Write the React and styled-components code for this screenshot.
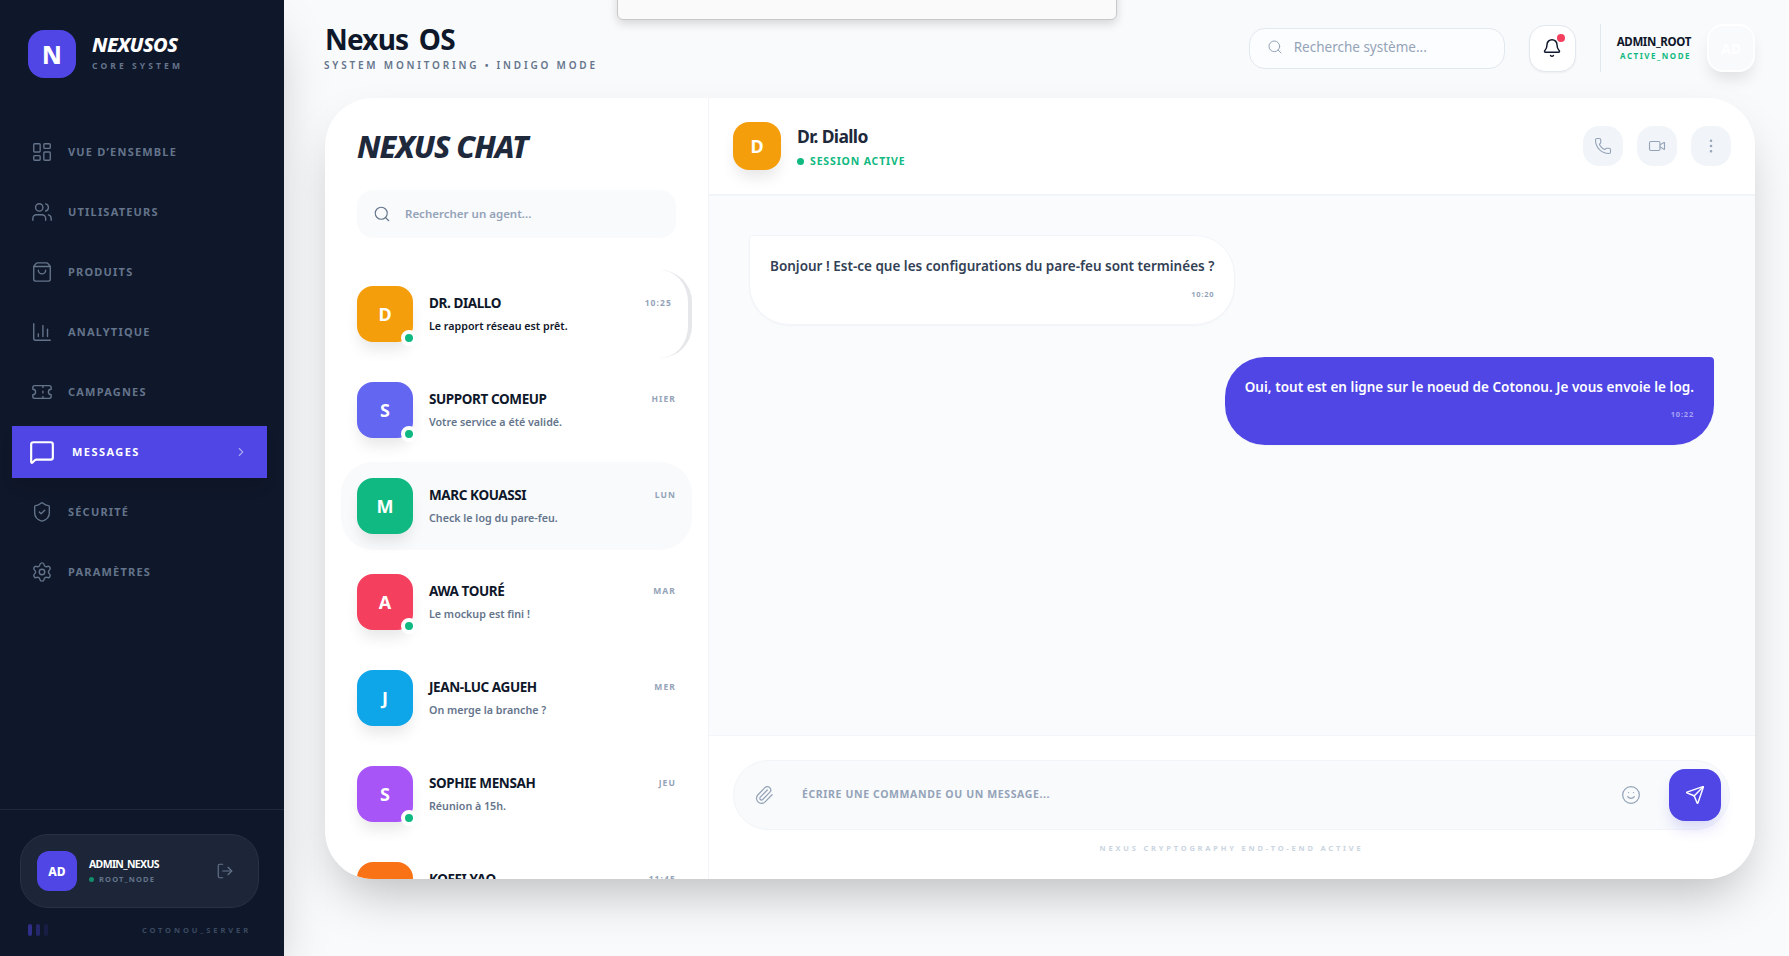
import React from "react";
import styled, { createGlobalStyle } from "styled-components";
import {
  LayoutDashboard,
  Users,
  ShoppingBag,
  ChartColumn,
  Ticket,
  MessageSquare,
  ShieldCheck,
  Settings,
  ChevronRight,
  LogOut,
  Search,
  Bell,
  Phone,
  Video,
  EllipsisVertical,
  Paperclip,
  Smile,
  Send
} from "lucide-react";

const FONT = `"Noto Sans", "Open Sans", sans-serif`;

const GlobalStyle = createGlobalStyle`
  * { box-sizing: border-box; }
  html, body { margin: 0; height: 100%; overflow: hidden; }
  body { font-family: ${FONT}; background: #f8fafc; }
`;

const Page = styled.div`
  display: flex;
  width: 100vw;
  height: 100vh;
  background: #f8fafc;
  overflow: hidden;
`;

const Sidebar = styled.aside`
  flex: 0 0 284px;
  display: flex;
  flex-direction: column;
  background: #0f172a;
  box-shadow: 0 25px 50px -12px rgba(0, 0, 0, 0.25);
  z-index: 2;
`;

const Brand = styled.div`
  display: flex;
  gap: 16px;
  padding: 30px 28px 0;
  height: 126px;
  align-items: flex-start;
`;

const BrandLogo = styled.div`
  width: 48px;
  height: 48px;
  border-radius: 16px;
  background: #4f46e5;
  color: #fff;
  display: flex;
  align-items: center;
  justify-content: center;
  font-size: 24px;
  font-weight: 800;
`;

const BrandText = styled.div`
  padding-top: 2px;
`;

const BrandName = styled.div`
  color: #fff;
  font-size: 20px;
  line-height: 26px;
  font-weight: 800;
  font-style: italic;
  letter-spacing: -0.55px;
`;

const BrandSub = styled.div`
  color: #64748b;
  font-size: 8.5px;
  line-height: 12px;
  margin-top: 2px;
  font-weight: 700;
  letter-spacing: 3.1px;
`;

const Nav = styled.nav`
  flex: 1;
  display: flex;
  flex-direction: column;
  gap: 8px;
  padding: 0 17px 0 12px;
`;

const NavItem = styled.div`
  height: 52px;
  display: flex;
  align-items: center;
  padding-left: ${(p) => (p.$active ? "17px" : "19px")};
  gap: ${(p) => (p.$active ? "17px" : "15px")};
  color: ${(p) => (p.$active ? "#fff" : "#64748b")};
  background: ${(p) => (p.$active ? "#4f46e5" : "transparent")};
  box-shadow: ${(p) => (p.$active ? "0 10px 15px -3px rgba(0,0,0,.12)" : "none")};
`;

const NavLabel = styled.span`
  flex: 1;
  padding-bottom: 2px;
  font-size: 11px;
  font-weight: 700;
  letter-spacing: ${(p) => (p.$active ? "1.45px" : "1.2px")};
`;

const NavArrow = styled.span`
  display: flex;
  margin-right: 19px;
  color: rgba(255, 255, 255, 0.5);
`;

const SideFooter = styled.div`
  border-top: 1px solid #1e293b;
  padding: 24px 25px 0 20px;
  height: 147px;
`;

const ProfileCard = styled.div`
  height: 74px;
  display: flex;
  align-items: center;
  gap: 12px;
  padding: 0 24px 0 16px;
  background: rgba(30, 41, 59, 0.85);
  border: 1px solid #273245;
  border-radius: 28px;
`;

const ProfileAvatar = styled.div`
  width: 40px;
  height: 40px;
  border-radius: 12px;
  background: #4f46e5;
  color: #fff;
  font-size: 12px;
  font-weight: 800;
  display: flex;
  align-items: center;
  justify-content: center;
`;

const ProfileInfo = styled.div`
  flex: 1;
`;

const ProfileName = styled.div`
  color: #fff;
  font-size: 10.5px;
  line-height: 14px;
  font-weight: 700;
  letter-spacing: -0.65px;
`;

const ProfileRole = styled.div`
  display: flex;
  align-items: center;
  gap: 5px;
  color: #64748b;
  font-size: 7.5px;
  line-height: 12px;
  font-weight: 700;
  letter-spacing: 1.15px;
  margin-top: 2px;
`;

const RoleDot = styled.span`
  width: 5px;
  height: 5px;
  border-radius: 50%;
  background: #10b981;
  opacity: 0.7;
`;

const ServerRow = styled.div`
  display: flex;
  justify-content: space-between;
  align-items: center;
  padding: 16px 8px 0 8px;
`;

const Bars = styled.div`
  display: flex;
  gap: 4px;
`;

const Bar = styled.span`
  width: 4px;
  height: 12px;
  border-radius: 2px;
  background: #4f46e5;
  opacity: ${(p) => p.$level};
`;

const ServerName = styled.span`
  color: #3b4a60;
  font-size: 7.5px;
  font-weight: 700;
  letter-spacing: 2.9px;
`;

const Main = styled.main`
  flex: 1;
  min-width: 0;
  display: flex;
  flex-direction: column;
  padding: 0 34px 77px 41px;
`;

const TopBar = styled.header`
  flex: 0 0 98px;
  display: flex;
  align-items: flex-start;
  justify-content: space-between;
`;

const TitleBlock = styled.div`
  padding-top: 22px;
`;

const PageTitle = styled.h1`
  margin: 0;
  color: #0f172a;
  font-size: 28px;
  line-height: 34px;
  font-weight: 700;
  letter-spacing: -0.8px;
  word-spacing: 4px;
`;

const PageSub = styled.div`
  color: #64748b;
  font-size: 10px;
  line-height: 14px;
  margin-top: 2px;
  margin-left: -1px;
  font-weight: 600;
  letter-spacing: 2.8px;
`;

const TopRight = styled.div`
  display: flex;
  align-items: center;
  padding-top: 24px;
`;

const TopSearch = styled.div`
  width: 256px;
  height: 41px;
  display: flex;
  align-items: center;
  gap: 11px;
  padding: 0 0 3px 17px;
  border: 1px solid #e2e8f0;
  border-radius: 16px;
  background: #fcfdfe;
  color: #94a3b8;
  font-size: 13.5px;
  margin-right: 24px;
`;

const BellButton = styled.div`
  position: relative;
  width: 47px;
  height: 47px;
  border: 1px solid #e2e8f0;
  border-radius: 16px;
  background: #fff;
  color: #0f172a;
  display: flex;
  align-items: center;
  justify-content: center;
  box-shadow: 0 1px 2px rgba(0, 0, 0, 0.05);
  margin-right: 24px;
`;

const BellBadge = styled.span`
  position: absolute;
  top: 8px;
  right: 10px;
  width: 8px;
  height: 8px;
  border-radius: 50%;
  background: #f43f5e;
`;

const TopDivider = styled.div`
  width: 1px;
  height: 48px;
  background: #e2e8f0;
  margin-right: 16px;
`;

const UserInfo = styled.div`
  text-align: right;
  margin-right: 16px;
`;

const UserName = styled.div`
  color: #0f172a;
  font-size: 11.5px;
  line-height: 15px;
  font-weight: 700;
  letter-spacing: -0.35px;
  margin-top: -2px;
`;

const UserState = styled.div`
  color: #10b981;
  font-size: 8px;
  line-height: 11px;
  margin-top: 1px;
  font-weight: 700;
  letter-spacing: 1.5px;
`;

const UserAvatar = styled.div`
  width: 48px;
  height: 48px;
  border: 2px solid #fff;
  border-radius: 16px;
  background: #f8fafc;
  color: #fff;
  font-size: 14px;
  font-weight: 800;
  display: flex;
  align-items: center;
  justify-content: center;
  box-shadow: 0 10px 15px -3px rgba(0, 0, 0, 0.1);
`;

const Card = styled.section`
  flex: 1;
  min-height: 0;
  display: flex;
  background: #fff;
  border-radius: 48px;
  overflow: hidden;
  box-shadow: 0 25px 50px -12px rgba(0, 0, 0, 0.25);
`;

const ListPanel = styled.div`
  flex: 0 0 384px;
  display: flex;
  flex-direction: column;
  border-right: 1px solid #f1f5f9;
  overflow: hidden;
`;

const ListTitle = styled.h2`
  flex: none;
  margin: 0;
  padding: 28px 32px 0;
  height: 92px;
  color: #1e293b;
  font-size: 30.5px;
  line-height: 40px;
  font-weight: 800;
  font-style: italic;
  letter-spacing: -1px;
`;

const ListSearch = styled.div`
  flex: none;
  margin: 0 32px 32px;
  height: 48px;
  display: flex;
  align-items: center;
  gap: 14px;
  padding: 0 0 0 16px;
  border-radius: 16px;
  background: #f8fafc;
  color: #94a3b8;
  font-size: 11.5px;
  font-weight: 600;
`;

const ListSearchText = styled.span`
  padding-bottom: 2px;
`;

const ListItems = styled.div`
  flex: none;
  display: flex;
  flex-direction: column;
  gap: 8px;
  padding: 0 16px;
`;

const ChatRow = styled.div`
  flex: none;
  height: 88px;
  display: flex;
  align-items: center;
  gap: 16px;
  padding: 0 16px;
  border-radius: 32px;
  background: ${(p) => (p.$hover ? "#f8fafc" : "#fff")};
  border-right: ${(p) => (p.$active ? "4px solid #e5e7eb" : "0")};
`;

const Avatar = styled.div`
  position: relative;
  flex: none;
  width: ${(p) => p.$size}px;
  height: ${(p) => p.$size}px;
  border-radius: 16px;
  background: ${(p) => p.$color};
  color: #fff;
  font-size: 18px;
  font-weight: 700;
  display: flex;
  align-items: center;
  justify-content: center;
  box-shadow: 0 10px 15px -3px rgba(0, 0, 0, 0.1);
`;

const OnlineDot = styled.span`
  position: absolute;
  right: -4px;
  bottom: -4px;
  width: 16px;
  height: 16px;
  border: 4px solid #fff;
  border-radius: 50%;
  background: #10b981;
`;

const RowBody = styled.div`
  flex: 1;
  min-width: 0;
  padding-bottom: 2px;
`;

const RowHead = styled.div`
  display: flex;
  align-items: center;
  justify-content: space-between;
`;

const RowName = styled.span`
  color: #0f172a;
  font-size: 13.5px;
  line-height: 20px;
  font-weight: 700;
  letter-spacing: -0.4px;
`;

const RowTime = styled.span`
  color: #94a3b8;
  font-size: 8.5px;
  font-weight: 700;
  letter-spacing: 1.1px;
`;

const RowPreview = styled.div`
  color: ${(p) => (p.$active ? "#0f172a" : "#64748b")};
  font-size: 10.7px;
  line-height: 16px;
  font-weight: 600;
  margin-top: 5px;
`;

const ChatPanel = styled.div`
  flex: 1;
  min-width: 0;
  display: flex;
  flex-direction: column;
  background: #fff;
`;

const ChatHeader = styled.div`
  flex: 0 0 98px;
  display: flex;
  align-items: center;
  gap: 16px;
  padding: 0 24px;
  border-bottom: 2px solid #f1f5f9;
`;

const ChatPerson = styled.div`
  flex: 1;
`;

const ChatName = styled.div`
  color: #1e293b;
  font-size: 17.5px;
  line-height: 24px;
  font-weight: 700;
  letter-spacing: -0.65px;
`;

const ChatStatus = styled.div`
  display: flex;
  align-items: center;
  gap: 6px;
  margin-top: 6px;
  color: #10b981;
  font-size: 10.5px;
  line-height: 14px;
  font-weight: 700;
  letter-spacing: 0.85px;
`;

const StatusDot = styled.span`
  width: 7px;
  height: 7px;
  border-radius: 50%;
  background: #10b981;
`;

const HeaderActions = styled.div`
  display: flex;
  gap: 14px;
`;

const ActionButton = styled.div`
  width: 40px;
  height: 40px;
  border-radius: 16px;
  background: #f1f5f9;
  color: #94a3b8;
  display: flex;
  align-items: center;
  justify-content: center;
`;

const MessageArea = styled.div`
  flex: 1;
  min-height: 0;
  display: flex;
  flex-direction: column;
  gap: 32px;
  padding: 39px 41px 39px 40px;
  background: #fafbfd;
`;

const Bubble = styled.div`
  align-self: ${(p) => (p.$mine ? "flex-end" : "flex-start")};
  padding: 20px;
  height: ${(p) => (p.$mine ? "88px" : "90px")};
  color: ${(p) => (p.$mine ? "#fff" : "#334155")};
  background: ${(p) => (p.$mine ? "#4f46e5" : "#fff")};
  border: ${(p) => (p.$mine ? "0" : "1px solid #f1f5f9")};
  border-radius: ${(p) => (p.$mine ? "40px 4px 40px 40px" : "4px 40px 40px 40px")};
  box-shadow: 0 1px 2px rgba(0, 0, 0, 0.03);
`;

const BubbleText = styled.div`
  font-size: 13.5px;
  line-height: 20px;
  font-weight: 600;
  white-space: nowrap;
  letter-spacing: ${(p) => (p.$mine ? "0.03px" : "0")};
`;

const BubbleTime = styled.div`
  margin-top: ${(p) => (p.$mine ? "12px" : "13px")};
  text-align: right;
  color: ${(p) => (p.$mine ? "rgba(255,255,255,.5)" : "#94a3b8")};
  font-size: 7.5px;
  line-height: 10px;
  font-weight: 700;
  letter-spacing: 0.8px;
`;

const Composer = styled.div`
  flex: 0 0 144px;
  padding: 24px 25px 0 24px;
  border-top: 1px solid #f1f5f9;
`;

const ComposerBox = styled.div`
  height: 70px;
  display: flex;
  align-items: center;
  padding: 0 8px 0 20px;
  border: 1px solid #f1f5f9;
  border-radius: 35px;
  background: #f8fafc;
  color: #94a3b8;
`;

const ComposerHint = styled.span`
  flex: 1;
  margin-left: 28px;
  padding-bottom: 3px;
  font-size: 10.5px;
  font-weight: 700;
  letter-spacing: 0.62px;
`;

const SendButton = styled.div`
  width: 52px;
  height: 52px;
  margin-left: 28px;
  border-radius: 16px;
  background: #4f46e5;
  color: #fff;
  display: flex;
  align-items: center;
  justify-content: center;
  box-shadow: 0 10px 15px -3px rgba(79, 70, 229, 0.2);
`;

const ComposerNote = styled.div`
  margin-top: 12px;
  text-align: center;
  color: #cbd5e1;
  font-size: 7.5px;
  line-height: 12px;
  font-weight: 700;
  letter-spacing: 2.8px;
`;

// the dialog hanging off the top of the window
const HangingPanel = styled.div`
  position: fixed;
  top: -40px;
  left: 617px;
  width: 500px;
  height: 60px;
  background: #fafafa;
  border: 1px solid #c8c8c8;
  border-radius: 6px;
  box-shadow: 0 4px 10px rgba(0, 0, 0, 0.14);
  z-index: 5;
`;

const navItems = [
  { label: "VUE D’ENSEMBLE", icon: LayoutDashboard },
  { label: "UTILISATEURS", icon: Users },
  { label: "PRODUITS", icon: ShoppingBag },
  { label: "ANALYTIQUE", icon: ChartColumn },
  { label: "CAMPAGNES", icon: Ticket },
  { label: "MESSAGES", icon: MessageSquare, active: true },
  { label: "SÉCURITÉ", icon: ShieldCheck },
  { label: "PARAMÈTRES", icon: Settings }
];

const chats = [
  { name: "DR. DIALLO", time: "10:25", text: "Le rapport réseau est prêt.", color: "#f59e0b", online: true, active: true },
  { name: "SUPPORT COMEUP", time: "HIER", text: "Votre service a été validé.", color: "#6366f1", online: true },
  { name: "MARC KOUASSI", time: "LUN", text: "Check le log du pare-feu.", color: "#10b981", hover: true },
  { name: "AWA TOURÉ", time: "MAR", text: "Le mockup est fini !", color: "#f43f5e", online: true },
  { name: "JEAN-LUC AGUEH", time: "MER", text: "On merge la branche ?", color: "#0ea5e9" },
  { name: "SOPHIE MENSAH", time: "JEU", text: "Réunion à 15h.", color: "#a855f7", online: true },
  { name: "KOFFI YAO", time: "11:45", text: "\u00a0", color: "#f97316" }
];

const App = () => {
  return (
    <Page>
      <GlobalStyle />
      <HangingPanel />
      <Sidebar>
        <Brand>
          <BrandLogo>N</BrandLogo>
          <BrandText>
            <BrandName>NEXUSOS</BrandName>
            <BrandSub>CORE SYSTEM</BrandSub>
          </BrandText>
        </Brand>
        <Nav>
          {navItems.map((item) => {
            const Icon = item.icon;
            return (
              <NavItem key={item.label} $active={item.active}>
                <Icon size={item.active ? 26 : 22} strokeWidth={item.active ? 2 : 1.5} />
                <NavLabel $active={item.active}>{item.label}</NavLabel>
                {item.active && (
                  <NavArrow>
                    <ChevronRight size={14} />
                  </NavArrow>
                )}
              </NavItem>
            );
          })}
        </Nav>
        <SideFooter>
          <ProfileCard>
            <ProfileAvatar>AD</ProfileAvatar>
            <ProfileInfo>
              <ProfileName>ADMIN_NEXUS</ProfileName>
              <ProfileRole>
                <RoleDot />
                ROOT_NODE
              </ProfileRole>
            </ProfileInfo>
            <LogOut size={18} color="#64748b" strokeWidth={1.5} />
          </ProfileCard>
          <ServerRow>
            <Bars>
              <Bar $level={0.5} />
              <Bar $level={0.35} />
              <Bar $level={0.15} />
            </Bars>
            <ServerName>COTONOU_SERVER</ServerName>
          </ServerRow>
        </SideFooter>
      </Sidebar>
      <Main>
        <TopBar>
          <TitleBlock>
            <PageTitle>Nexus OS</PageTitle>
            <PageSub>SYSTEM MONITORING • INDIGO MODE</PageSub>
          </TitleBlock>
          <TopRight>
            <TopSearch>
              <Search size={16} strokeWidth={1.5} />
              Recherche système...
            </TopSearch>
            <BellButton>
              <Bell size={20} strokeWidth={1.75} />
              <BellBadge />
            </BellButton>
            <TopDivider />
            <UserInfo>
              <UserName>ADMIN_ROOT</UserName>
              <UserState>ACTIVE_NODE</UserState>
            </UserInfo>
            <UserAvatar>AD</UserAvatar>
          </TopRight>
        </TopBar>
        <Card>
          <ListPanel>
            <ListTitle>NEXUS CHAT</ListTitle>
            <ListSearch>
              <Search size={18} color="#64748b" strokeWidth={1.5} />
              <ListSearchText>Rechercher un agent...</ListSearchText>
            </ListSearch>
            <ListItems>
              {chats.map((chat) => (
                <ChatRow key={chat.name} $active={chat.active} $hover={chat.hover}>
                  <Avatar $size={56} $color={chat.color}>
                    {chat.name.charAt(0)}
                    {chat.online && <OnlineDot />}
                  </Avatar>
                  <RowBody>
                    <RowHead>
                      <RowName>{chat.name}</RowName>
                      <RowTime>{chat.time}</RowTime>
                    </RowHead>
                    <RowPreview $active={chat.active}>{chat.text}</RowPreview>
                  </RowBody>
                </ChatRow>
              ))}
            </ListItems>
          </ListPanel>
          <ChatPanel>
            <ChatHeader>
              <Avatar $size={48} $color="#f59e0b">
                D
              </Avatar>
              <ChatPerson>
                <ChatName>Dr. Diallo</ChatName>
                <ChatStatus>
                  <StatusDot />
                  SESSION ACTIVE
                </ChatStatus>
              </ChatPerson>
              <HeaderActions>
                <ActionButton>
                  <Phone size={18} strokeWidth={1.5} />
                </ActionButton>
                <ActionButton>
                  <Video size={18} strokeWidth={1.5} />
                </ActionButton>
                <ActionButton>
                  <EllipsisVertical size={18} strokeWidth={1.5} />
                </ActionButton>
              </HeaderActions>
            </ChatHeader>
            <MessageArea>
              <Bubble>
                <BubbleText>Bonjour ! Est-ce que les configurations du pare-feu sont terminées ?</BubbleText>
                <BubbleTime>10:20</BubbleTime>
              </Bubble>
              <Bubble $mine>
                <BubbleText $mine>Oui, tout est en ligne sur le noeud de Cotonou. Je vous envoie le log.</BubbleText>
                <BubbleTime $mine>10:22</BubbleTime>
              </Bubble>
            </MessageArea>
            <Composer>
              <ComposerBox>
                <Paperclip size={20} strokeWidth={1.5} />
                <ComposerHint>ÉCRIRE UNE COMMANDE OU UN MESSAGE...</ComposerHint>
                <Smile size={20} strokeWidth={1.5} />
                <SendButton>
                  <Send size={20} strokeWidth={1.75} />
                </SendButton>
              </ComposerBox>
              <ComposerNote>NEXUS CRYPTOGRAPHY END-TO-END ACTIVE</ComposerNote>
            </Composer>
          </ChatPanel>
        </Card>
      </Main>
    </Page>
  );
};

export default App;
